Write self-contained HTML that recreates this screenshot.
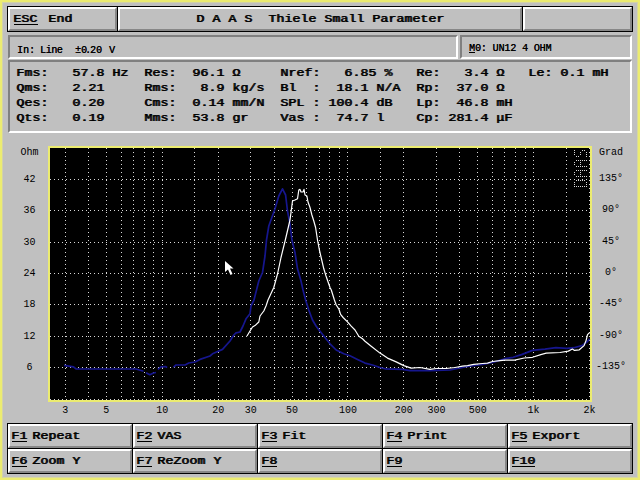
<!DOCTYPE html><html><head><meta charset="utf-8"><style>
*{margin:0;padding:0;box-sizing:content-box}
html,body{width:640px;height:480px;overflow:hidden;background:#c0c0c0}
#scr{position:absolute;left:0;top:0;width:636px;height:476px;border:2px solid #ecec70;background:#c0c0c0}
.btn{position:absolute;border:1px solid #000;background:#c0c0c0}
.btn::after{content:'';position:absolute;left:0;top:0;right:0;bottom:0;border:2px solid;border-color:#ffffff #878787 #878787 #ffffff}
.pnl{position:absolute;border:2px solid;border-color:#808080 #ffffff #ffffff #808080;background:#c0c0c0}
.b{position:absolute;font:11px/11px "Liberation Mono",monospace;letter-spacing:0.067px;white-space:pre;color:#000;transform:scaleX(1.2);transform-origin:0 0;text-shadow:0.8px 0 0 #000}
.t{position:absolute;font:10px/10px "Liberation Mono",monospace;white-space:pre;color:#000;text-shadow:0.3px 0 0 #000}
.u{position:absolute;height:1px;background:#000}
.t2{position:absolute;font:10px/10px "Liberation Mono",monospace;white-space:pre;color:#000}
</style></head><body><div id="scr"></div><div style="position:absolute;left:637px;top:2px;width:1px;height:476px;background:#d8d89c"></div><div style="position:absolute;left:2px;top:477px;width:636px;height:1px;background:#d8d89c"></div><div style="position:absolute;left:2px;top:2px;width:1px;height:476px;background:#d2d2a8"></div><div style="position:absolute;left:2px;top:2px;width:636px;height:1px;background:#d2d2a8"></div>
<div class="btn" style="left:7px;top:6px;width:109px;height:24px"></div>
<div class="btn" style="left:117px;top:6px;width:404px;height:24px"></div>
<div class="btn" style="left:522px;top:6px;width:109px;height:24px"></div>
<div class="b" style="left:13px;top:14px">ESC</div>
<div class="u" style="left:14px;top:24px;width:24px"></div>
<div class="b" style="left:48px;top:14px">End</div>
<div class="b" style="left:196px;top:14px">D A A S  Thiele Small Parameter</div>
<div class="pnl" style="left:8px;top:35px;width:446px;height:20px"></div>
<div class="pnl" style="left:460px;top:35px;width:168px;height:20px"></div>
<div class="t" style="left:17px;top:46px">In:</div>
<div class="t" style="left:40px;top:46px"><span style="letter-spacing:-0.4px">Line</span></div>
<div class="t" style="left:75px;top:46px">±0</div>
<div class="t" style="left:85px;top:46px">.</div>
<div class="t" style="left:90px;top:46px">20</div>
<div class="t" style="left:109px;top:46px">V</div>
<div class="t" style="left:469px;top:44px"><span style="letter-spacing:-0.12px">M0: UN12 4 OHM</span></div>
<div class="u" style="left:469px;top:52px;width:6px"></div>
<div class="pnl" style="left:8px;top:60px;width:620px;height:69px"></div>
<div class="b" style="left:16px;top:68px">Fms:</div>
<div class="b" style="left:72px;top:68px">57.8</div>
<div class="b" style="left:112px;top:68px">Hz</div>
<div class="b" style="left:144px;top:68px">Res:</div>
<div class="b" style="left:192px;top:68px">96.1</div>
<div class="b" style="left:232px;top:68px">Ω</div>
<div class="b" style="left:280px;top:68px">Nref:</div>
<div class="b" style="left:344px;top:68px">6.85</div>
<div class="b" style="left:384px;top:68px">%</div>
<div class="b" style="left:416px;top:68px">Re:</div>
<div class="b" style="left:464px;top:68px">3.4</div>
<div class="b" style="left:496px;top:68px">Ω</div>
<div class="b" style="left:528px;top:68px">Le:</div>
<div class="b" style="left:560px;top:68px">0.1</div>
<div class="b" style="left:592px;top:68px">mH</div>
<div class="b" style="left:16px;top:83px">Qms:</div>
<div class="b" style="left:72px;top:83px">2.21</div>
<div class="b" style="left:144px;top:83px">Rms:</div>
<div class="b" style="left:200px;top:83px">8.9</div>
<div class="b" style="left:232px;top:83px">kg/s</div>
<div class="b" style="left:280px;top:83px">Bl</div>
<div class="b" style="left:312px;top:83px">:</div>
<div class="b" style="left:336px;top:83px">18.1</div>
<div class="b" style="left:376px;top:83px">N/A</div>
<div class="b" style="left:416px;top:83px">Rp:</div>
<div class="b" style="left:456px;top:83px">37.0</div>
<div class="b" style="left:496px;top:83px">Ω</div>
<div class="b" style="left:16px;top:98px">Qes:</div>
<div class="b" style="left:72px;top:98px">0.20</div>
<div class="b" style="left:144px;top:98px">Cms:</div>
<div class="b" style="left:192px;top:98px">0.14</div>
<div class="b" style="left:232px;top:98px">mm/N</div>
<div class="b" style="left:280px;top:98px">SPL</div>
<div class="b" style="left:312px;top:98px">:</div>
<div class="b" style="left:328px;top:98px">100.4</div>
<div class="b" style="left:376px;top:98px">dB</div>
<div class="b" style="left:416px;top:98px">Lp:</div>
<div class="b" style="left:456px;top:98px">46.8</div>
<div class="b" style="left:496px;top:98px">mH</div>
<div class="b" style="left:16px;top:113px">Qts:</div>
<div class="b" style="left:72px;top:113px">0.19</div>
<div class="b" style="left:144px;top:113px">Mms:</div>
<div class="b" style="left:192px;top:113px">53.8</div>
<div class="b" style="left:232px;top:113px">gr</div>
<div class="b" style="left:280px;top:113px">Vas</div>
<div class="b" style="left:312px;top:113px">:</div>
<div class="b" style="left:336px;top:113px">74.7</div>
<div class="b" style="left:376px;top:113px">l</div>
<div class="b" style="left:416px;top:113px">Cp:</div>
<div class="b" style="left:448px;top:113px">281.4</div>
<div class="b" style="left:496px;top:113px">μF</div>
<svg style="position:absolute;left:0;top:0" width="640" height="480" viewBox="0 0 640 480"><rect x="48" y="146" width="544" height="256" fill="#ecec70"/><rect x="50" y="148" width="540" height="252" fill="#000"/><line x1="65.5" y1="148" x2="65.5" y2="400" stroke="#d8d8d8" stroke-width="1" stroke-dasharray="1 3" shape-rendering="crispEdges"/><line x1="88.5" y1="148" x2="88.5" y2="400" stroke="#d8d8d8" stroke-width="1" stroke-dasharray="1 3" shape-rendering="crispEdges"/><line x1="106.5" y1="148" x2="106.5" y2="400" stroke="#d8d8d8" stroke-width="1" stroke-dasharray="1 3" shape-rendering="crispEdges"/><line x1="121.5" y1="148" x2="121.5" y2="400" stroke="#d8d8d8" stroke-width="1" stroke-dasharray="1 3" shape-rendering="crispEdges"/><line x1="133.5" y1="148" x2="133.5" y2="400" stroke="#d8d8d8" stroke-width="1" stroke-dasharray="1 3" shape-rendering="crispEdges"/><line x1="144.5" y1="148" x2="144.5" y2="400" stroke="#d8d8d8" stroke-width="1" stroke-dasharray="1 3" shape-rendering="crispEdges"/><line x1="153.5" y1="148" x2="153.5" y2="400" stroke="#d8d8d8" stroke-width="1" stroke-dasharray="1 3" shape-rendering="crispEdges"/><line x1="162.5" y1="148" x2="162.5" y2="400" stroke="#d8d8d8" stroke-width="1" stroke-dasharray="1 3" shape-rendering="crispEdges"/><line x1="194.5" y1="148" x2="194.5" y2="400" stroke="#d8d8d8" stroke-width="1" stroke-dasharray="1 3" shape-rendering="crispEdges"/><line x1="218.5" y1="148" x2="218.5" y2="400" stroke="#d8d8d8" stroke-width="1" stroke-dasharray="1 3" shape-rendering="crispEdges"/><line x1="250.5" y1="148" x2="250.5" y2="400" stroke="#d8d8d8" stroke-width="1" stroke-dasharray="1 3" shape-rendering="crispEdges"/><line x1="274.5" y1="148" x2="274.5" y2="400" stroke="#d8d8d8" stroke-width="1" stroke-dasharray="1 3" shape-rendering="crispEdges"/><line x1="292.5" y1="148" x2="292.5" y2="400" stroke="#d8d8d8" stroke-width="1" stroke-dasharray="1 3" shape-rendering="crispEdges"/><line x1="306.5" y1="148" x2="306.5" y2="400" stroke="#d8d8d8" stroke-width="1" stroke-dasharray="1 3" shape-rendering="crispEdges"/><line x1="319.5" y1="148" x2="319.5" y2="400" stroke="#d8d8d8" stroke-width="1" stroke-dasharray="1 3" shape-rendering="crispEdges"/><line x1="329.5" y1="148" x2="329.5" y2="400" stroke="#d8d8d8" stroke-width="1" stroke-dasharray="1 3" shape-rendering="crispEdges"/><line x1="339.5" y1="148" x2="339.5" y2="400" stroke="#d8d8d8" stroke-width="1" stroke-dasharray="1 3" shape-rendering="crispEdges"/><line x1="347.5" y1="148" x2="347.5" y2="400" stroke="#d8d8d8" stroke-width="1" stroke-dasharray="1 3" shape-rendering="crispEdges"/><line x1="380.5" y1="148" x2="380.5" y2="400" stroke="#d8d8d8" stroke-width="1" stroke-dasharray="1 3" shape-rendering="crispEdges"/><line x1="403.5" y1="148" x2="403.5" y2="400" stroke="#d8d8d8" stroke-width="1" stroke-dasharray="1 3" shape-rendering="crispEdges"/><line x1="436.5" y1="148" x2="436.5" y2="400" stroke="#d8d8d8" stroke-width="1" stroke-dasharray="1 3" shape-rendering="crispEdges"/><line x1="459.5" y1="148" x2="459.5" y2="400" stroke="#d8d8d8" stroke-width="1" stroke-dasharray="1 3" shape-rendering="crispEdges"/><line x1="477.5" y1="148" x2="477.5" y2="400" stroke="#d8d8d8" stroke-width="1" stroke-dasharray="1 3" shape-rendering="crispEdges"/><line x1="492.5" y1="148" x2="492.5" y2="400" stroke="#d8d8d8" stroke-width="1" stroke-dasharray="1 3" shape-rendering="crispEdges"/><line x1="504.5" y1="148" x2="504.5" y2="400" stroke="#d8d8d8" stroke-width="1" stroke-dasharray="1 3" shape-rendering="crispEdges"/><line x1="515.5" y1="148" x2="515.5" y2="400" stroke="#d8d8d8" stroke-width="1" stroke-dasharray="1 3" shape-rendering="crispEdges"/><line x1="525.5" y1="148" x2="525.5" y2="400" stroke="#d8d8d8" stroke-width="1" stroke-dasharray="1 3" shape-rendering="crispEdges"/><line x1="533.5" y1="148" x2="533.5" y2="400" stroke="#d8d8d8" stroke-width="1" stroke-dasharray="1 3" shape-rendering="crispEdges"/><line x1="566.5" y1="148" x2="566.5" y2="400" stroke="#d8d8d8" stroke-width="1" stroke-dasharray="1 3" shape-rendering="crispEdges"/><line x1="589.5" y1="148" x2="589.5" y2="400" stroke="#d8d8d8" stroke-width="1" stroke-dasharray="1 3" shape-rendering="crispEdges"/><line x1="50" y1="179.5" x2="590" y2="179.5" stroke="#d8d8d8" stroke-width="1" stroke-dasharray="1 3" shape-rendering="crispEdges"/><line x1="50" y1="210.5" x2="590" y2="210.5" stroke="#d8d8d8" stroke-width="1" stroke-dasharray="1 3" shape-rendering="crispEdges"/><line x1="50" y1="242.5" x2="590" y2="242.5" stroke="#d8d8d8" stroke-width="1" stroke-dasharray="1 3" shape-rendering="crispEdges"/><line x1="50" y1="273.5" x2="590" y2="273.5" stroke="#d8d8d8" stroke-width="1" stroke-dasharray="1 3" shape-rendering="crispEdges"/><line x1="50" y1="304.5" x2="590" y2="304.5" stroke="#d8d8d8" stroke-width="1" stroke-dasharray="1 3" shape-rendering="crispEdges"/><line x1="50" y1="336.5" x2="590" y2="336.5" stroke="#d8d8d8" stroke-width="1" stroke-dasharray="1 3" shape-rendering="crispEdges"/><line x1="50" y1="367.5" x2="590" y2="367.5" stroke="#d8d8d8" stroke-width="1" stroke-dasharray="1 3" shape-rendering="crispEdges"/><line x1="50" y1="399.5" x2="590" y2="399.5" stroke="#d8d8d8" stroke-width="1" stroke-dasharray="1 3" shape-rendering="crispEdges"/><polyline points="64.0,365.3 73.5,366.8 76.0,368.8 100.0,369.0 136.0,369.0 143.5,371.2" fill="none" stroke="#16168e" stroke-width="1.7" stroke-linejoin="round"/><polyline points="146.0,372.8 149.8,374.7 153.5,373.0 156.0,372.5" fill="none" stroke="#16168e" stroke-width="1.7" stroke-linejoin="round"/><polyline points="157.9,369.4 161.0,366.9 165.4,366.6 167.2,367.5" fill="none" stroke="#16168e" stroke-width="1.7" stroke-linejoin="round"/><polyline points="173.5,367.2 176.0,365.0 185.0,365.0 188.8,363.0 195.0,362.0 200.0,359.4 210.0,356.0 212.5,353.8 222.5,349.4 230.0,341.0 233.8,335.0 236.0,332.8 240.0,332.0 243.0,326.0 246.0,318.8 250.0,313.8 251.0,306.0 254.0,300.0 258.8,281.0 262.5,272.5 265.0,256.0 266.5,240.0 268.8,226.0 275.0,208.8 278.8,196.0 282.5,188.8 285.6,195.0 287.5,211.0 290.0,223.8 291.9,240.0 295.0,252.5 297.5,268.8 301.0,281.0 303.0,290.0 305.6,300.0 308.8,310.0 312.5,320.0 316.2,326.2 320.0,331.2 325.0,337.5 330.0,343.8 336.2,350.0 343.8,353.8 350.0,355.8 357.5,359.4 365.0,363.1 372.5,365.0 380.0,367.5 385.0,368.8 402.5,369.4 410.0,370.6 430.0,370.6 450.0,370.0 467.5,366.5 482.5,364.5 492.5,362.5 505.0,358.7 513.2,357.3 521.5,354.6 532.5,350.4 544.9,349.1 555.9,347.7 566.9,348.4 573.8,347.7 582.0,345.6 587.5,341.5 589.6,338.8" fill="none" stroke="#16168e" stroke-width="1.7" stroke-linejoin="round"/><polyline points="247.0,336.0 250.0,331.0 252.5,327.0 255.0,325.6 258.8,322.0 260.0,316.0 263.8,311.0 266.0,306.0 268.0,300.0 273.8,287.5 277.5,274.0 281.0,257.5 285.3,240.0 290.0,220.0 292.5,201.0 295.0,200.0 297.5,198.8 298.8,190.0 300.0,189.4 301.0,192.0 303.0,192.0 304.0,189.4 305.0,195.0 306.9,196.0 308.0,202.0 310.0,207.5 311.9,215.0 313.8,221.0 315.6,227.5 317.5,240.0 319.4,250.0 321.5,259.0 323.8,268.8 326.0,276.0 330.0,287.5 331.3,290.0 334.4,300.0 336.2,305.0 338.8,308.8 340.6,314.4 343.1,317.5 347.5,321.9 351.2,326.2 355.0,330.0 358.8,336.2 362.5,338.8 365.0,341.2 371.2,346.2 380.0,353.1 387.5,358.1 396.2,361.9 403.8,365.6 411.2,368.1 420.0,367.5 430.0,369.4 436.2,368.5 446.2,368.5 455.0,367.5 462.5,366.2 467.5,365.6 473.8,364.4 482.5,363.5 487.5,363.1 492.5,361.5 500.0,360.6 505.0,360.1 514.6,360.1 524.2,358.0 532.5,357.3 540.8,354.6 546.2,353.2 560.0,352.5 568.3,351.1 572.4,349.0 574.5,350.4 579.3,349.8 584.1,345.6 586.2,340.1 587.5,334.6 589.6,332.6" fill="none" stroke="#fff" stroke-width="1.2" stroke-linejoin="round"/><path d="M225,261 L225,272 L228,269.5 L230.5,275 L232.5,274 L230,268.5 L233.5,268.5 Z" fill="#fff"/><rect x="574" y="150" width="1" height="1" fill="#d8d8d8"/><rect x="582" y="150" width="1" height="1" fill="#d8d8d8"/><rect x="584" y="150" width="1" height="1" fill="#d8d8d8"/><rect x="574" y="152" width="1" height="1" fill="#d8d8d8"/><rect x="580" y="152" width="1" height="1" fill="#d8d8d8"/><rect x="586" y="152" width="1" height="1" fill="#d8d8d8"/><rect x="574" y="154" width="1" height="1" fill="#d8d8d8"/><rect x="580" y="154" width="1" height="1" fill="#d8d8d8"/><rect x="586" y="154" width="1" height="1" fill="#d8d8d8"/><rect x="576" y="156" width="1" height="1" fill="#d8d8d8"/><rect x="578" y="156" width="1" height="1" fill="#d8d8d8"/><rect x="586" y="156" width="1" height="1" fill="#d8d8d8"/><rect x="576" y="160" width="1" height="1" fill="#d8d8d8"/><rect x="578" y="160" width="1" height="1" fill="#d8d8d8"/><rect x="580" y="160" width="1" height="1" fill="#d8d8d8"/><rect x="582" y="160" width="1" height="1" fill="#d8d8d8"/><rect x="584" y="160" width="1" height="1" fill="#d8d8d8"/><rect x="586" y="160" width="1" height="1" fill="#d8d8d8"/><rect x="574" y="162" width="1" height="1" fill="#d8d8d8"/><rect x="580" y="162" width="1" height="1" fill="#d8d8d8"/><rect x="574" y="164" width="1" height="1" fill="#d8d8d8"/><rect x="580" y="164" width="1" height="1" fill="#d8d8d8"/><rect x="576" y="166" width="1" height="1" fill="#d8d8d8"/><rect x="578" y="166" width="1" height="1" fill="#d8d8d8"/><rect x="580" y="166" width="1" height="1" fill="#d8d8d8"/><rect x="582" y="166" width="1" height="1" fill="#d8d8d8"/><rect x="584" y="166" width="1" height="1" fill="#d8d8d8"/><rect x="586" y="166" width="1" height="1" fill="#d8d8d8"/><rect x="576" y="170" width="1" height="1" fill="#d8d8d8"/><rect x="578" y="170" width="1" height="1" fill="#d8d8d8"/><rect x="580" y="170" width="1" height="1" fill="#d8d8d8"/><rect x="582" y="170" width="1" height="1" fill="#d8d8d8"/><rect x="584" y="170" width="1" height="1" fill="#d8d8d8"/><rect x="586" y="170" width="1" height="1" fill="#d8d8d8"/><rect x="574" y="172" width="1" height="1" fill="#d8d8d8"/><rect x="580" y="172" width="1" height="1" fill="#d8d8d8"/><rect x="574" y="174" width="1" height="1" fill="#d8d8d8"/><rect x="580" y="174" width="1" height="1" fill="#d8d8d8"/><rect x="576" y="176" width="1" height="1" fill="#d8d8d8"/><rect x="578" y="176" width="1" height="1" fill="#d8d8d8"/><rect x="580" y="176" width="1" height="1" fill="#d8d8d8"/><rect x="582" y="176" width="1" height="1" fill="#d8d8d8"/><rect x="584" y="176" width="1" height="1" fill="#d8d8d8"/><rect x="586" y="176" width="1" height="1" fill="#d8d8d8"/><rect x="576" y="180" width="1" height="1" fill="#d8d8d8"/><rect x="578" y="180" width="1" height="1" fill="#d8d8d8"/><rect x="580" y="180" width="1" height="1" fill="#d8d8d8"/><rect x="582" y="180" width="1" height="1" fill="#d8d8d8"/><rect x="584" y="180" width="1" height="1" fill="#d8d8d8"/><rect x="574" y="182" width="1" height="1" fill="#d8d8d8"/><rect x="586" y="182" width="1" height="1" fill="#d8d8d8"/><rect x="574" y="184" width="1" height="1" fill="#d8d8d8"/><rect x="586" y="184" width="1" height="1" fill="#d8d8d8"/><rect x="574" y="186" width="1" height="1" fill="#d8d8d8"/><rect x="576" y="186" width="1" height="1" fill="#d8d8d8"/><rect x="578" y="186" width="1" height="1" fill="#d8d8d8"/><rect x="580" y="186" width="1" height="1" fill="#d8d8d8"/><rect x="582" y="186" width="1" height="1" fill="#d8d8d8"/><rect x="584" y="186" width="1" height="1" fill="#d8d8d8"/><rect x="586" y="186" width="1" height="1" fill="#d8d8d8"/></svg>
<div class="t2" style="left:0px;width:59px;text-align:center;top:148.0px">Ohm</div>
<div class="t2" style="left:0px;width:59px;text-align:center;top:175.0px">42</div>
<div class="t2" style="left:0px;width:59px;text-align:center;top:206.0px">36</div>
<div class="t2" style="left:0px;width:59px;text-align:center;top:238.0px">30</div>
<div class="t2" style="left:0px;width:59px;text-align:center;top:269.0px">24</div>
<div class="t2" style="left:0px;width:59px;text-align:center;top:300.0px">18</div>
<div class="t2" style="left:0px;width:59px;text-align:center;top:332.0px">12</div>
<div class="t2" style="left:0px;width:59px;text-align:center;top:363.0px">6</div>
<div class="t2" style="left:571px;width:80px;text-align:center;top:148.0px">Grad</div>
<div class="t2" style="left:571px;width:80px;text-align:center;top:174.0px">135°</div>
<div class="t2" style="left:571px;width:80px;text-align:center;top:204.5px">90°</div>
<div class="t2" style="left:571px;width:80px;text-align:center;top:237.0px">45°</div>
<div class="t2" style="left:571px;width:80px;text-align:center;top:268.0px">0°</div>
<div class="t2" style="left:571px;width:80px;text-align:center;top:299.0px">-45°</div>
<div class="t2" style="left:571px;width:80px;text-align:center;top:331.0px">-90°</div>
<div class="t2" style="left:571px;width:80px;text-align:center;top:362.0px">-135°</div>
<div class="t2" style="left:25.18308381745061px;width:80px;text-align:center;top:406px">3</div>
<div class="t2" style="left:66.36908233497755px;width:80px;text-align:center;top:406px">5</div>
<div class="t2" style="left:122.255px;width:80px;text-align:center;top:406px">10</div>
<div class="t2" style="left:178.14091766502244px;width:80px;text-align:center;top:406px">20</div>
<div class="t2" style="left:210.8320838174506px;width:80px;text-align:center;top:406px">30</div>
<div class="t2" style="left:252.01808233497752px;width:80px;text-align:center;top:406px">50</div>
<div class="t2" style="left:307.904px;width:80px;text-align:center;top:406px">100</div>
<div class="t2" style="left:363.7899176650225px;width:80px;text-align:center;top:406px">200</div>
<div class="t2" style="left:396.48108381745067px;width:80px;text-align:center;top:406px">300</div>
<div class="t2" style="left:437.6670823349775px;width:80px;text-align:center;top:406px">500</div>
<div class="t2" style="left:493.553px;width:80px;text-align:center;top:406px">1k</div>
<div class="t2" style="left:549.4389176650225px;width:80px;text-align:center;top:406px">2k</div>
<div class="btn" style="left:7px;top:423px;width:124px;height:24px"></div>
<div class="b" style="left:11px;top:431px">F1</div>
<div class="u" style="left:12px;top:441px;width:15px"></div>
<div class="b" style="left:32px;top:431px">Repeat</div>
<div class="btn" style="left:132px;top:423px;width:124px;height:24px"></div>
<div class="b" style="left:136px;top:431px">F2</div>
<div class="u" style="left:137px;top:441px;width:15px"></div>
<div class="b" style="left:157px;top:431px">VAS</div>
<div class="btn" style="left:257px;top:423px;width:124px;height:24px"></div>
<div class="b" style="left:261px;top:431px">F3</div>
<div class="u" style="left:262px;top:441px;width:15px"></div>
<div class="b" style="left:282px;top:431px">Fit</div>
<div class="btn" style="left:382px;top:423px;width:124px;height:24px"></div>
<div class="b" style="left:386px;top:431px">F4</div>
<div class="u" style="left:387px;top:441px;width:15px"></div>
<div class="b" style="left:407px;top:431px">Print</div>
<div class="btn" style="left:507px;top:423px;width:124px;height:24px"></div>
<div class="b" style="left:511px;top:431px">F5</div>
<div class="u" style="left:512px;top:441px;width:15px"></div>
<div class="b" style="left:532px;top:431px">Export</div>
<div class="btn" style="left:7px;top:448px;width:124px;height:24px"></div>
<div class="b" style="left:11px;top:456px">F6</div>
<div class="u" style="left:12px;top:466px;width:15px"></div>
<div class="b" style="left:32px;top:456px">Zoom Y</div>
<div class="btn" style="left:132px;top:448px;width:124px;height:24px"></div>
<div class="b" style="left:136px;top:456px">F7</div>
<div class="u" style="left:137px;top:466px;width:15px"></div>
<div class="b" style="left:157px;top:456px">ReZoom Y</div>
<div class="btn" style="left:257px;top:448px;width:124px;height:24px"></div>
<div class="b" style="left:261px;top:456px">F8</div>
<div class="u" style="left:262px;top:466px;width:15px"></div>
<div class="btn" style="left:382px;top:448px;width:124px;height:24px"></div>
<div class="b" style="left:386px;top:456px">F9</div>
<div class="u" style="left:387px;top:466px;width:15px"></div>
<div class="btn" style="left:507px;top:448px;width:124px;height:24px"></div>
<div class="b" style="left:511px;top:456px">F10</div>
<div class="u" style="left:512px;top:466px;width:23px"></div>
</body></html>
